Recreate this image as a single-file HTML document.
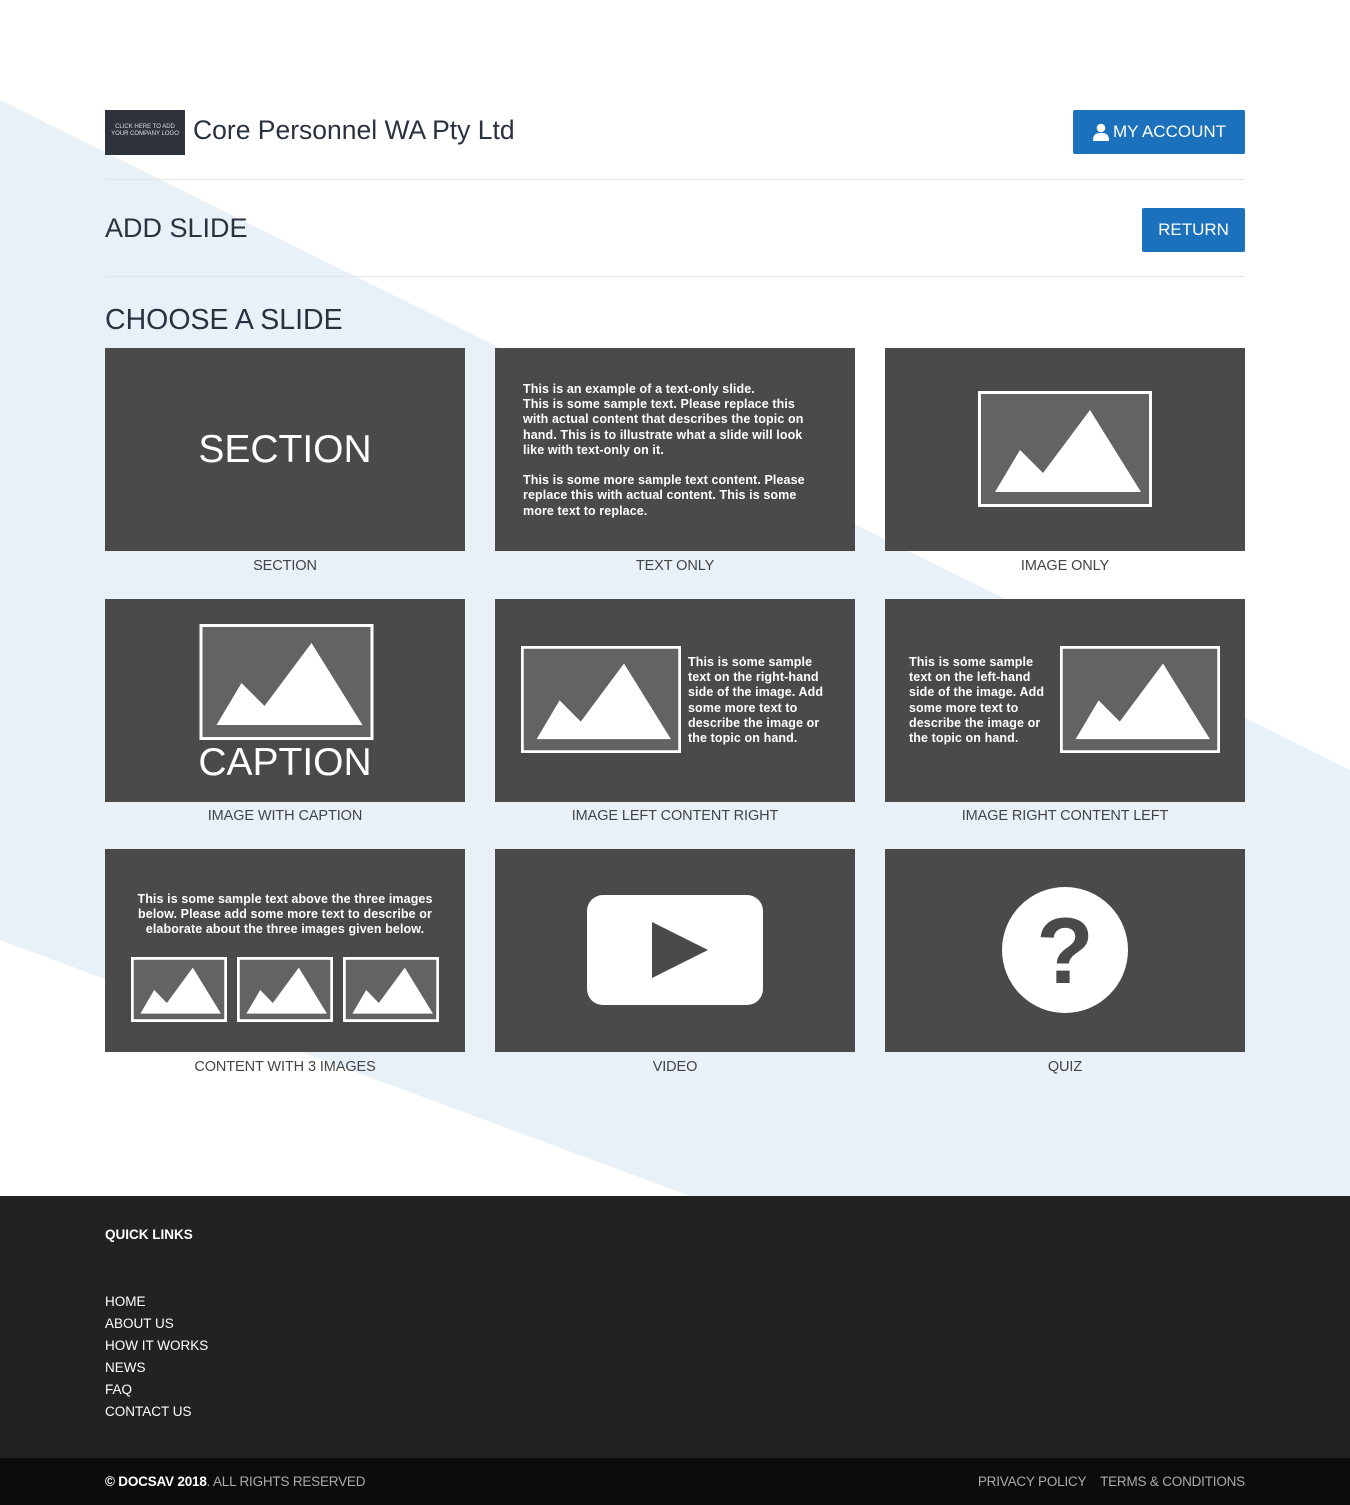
<!DOCTYPE html>
<html><head><meta charset="utf-8"><style>
*{margin:0;padding:0;box-sizing:border-box}
body{width:1350px;height:1505px;position:relative;font-family:"Liberation Sans",sans-serif;background:#fff;overflow:hidden;color:#333}
.abs{position:absolute}
.card{position:absolute;width:360px;height:203px;background:#4a4a4a;overflow:hidden}
.lbl{position:absolute;width:360px;text-align:center;font-size:14.5px;color:#444;letter-spacing:-0.1px}
.btn{position:absolute;background:#1b71bb;color:#fff;font-size:17px;display:flex;align-items:center;justify-content:center;border-radius:2px}
.hr{position:absolute;left:105px;width:1140px;height:1px;background:#e6e6e6}
.t{position:absolute;color:#fff;font-weight:bold;font-size:12.5px;line-height:15.2px;letter-spacing:0.1px}
.ft a{display:block;color:#fff;font-size:13.5px;line-height:22px;text-decoration:none}
</style></head><body>
<svg class="abs" style="left:0;top:0" width="1350" height="1200"><polygon points="0,100 1350,770 1350,1196 690,1196 0,940" fill="#e8f0f8"/></svg>

<div class="abs" style="left:105px;top:110px;width:80px;height:45px;background:#2e333b;color:#ddd;font-size:6px;text-align:center;padding-top:14px;line-height:7px">CLICK HERE TO ADD<br>YOUR COMPANY LOGO</div>
<div class="abs" style="left:193px;top:115px;font-size:26.5px;color:#2a3240">Core Personnel WA Pty Ltd</div>
<div class="btn" style="left:1073px;top:110px;width:172px;height:44px"><svg width="18" height="18" viewBox="0 0 18 18" style="margin-right:3px"><circle cx="9" cy="5" r="4.3" fill="#fff"/><path d="M1 18 C1 11 4 10 9 10 C14 10 17 11 17 18Z" fill="#fff"/></svg>MY ACCOUNT</div>
<div class="hr" style="top:179px"></div>
<div class="abs" style="left:105px;top:213px;font-size:27px;color:#2a3240">ADD SLIDE</div>
<div class="btn" style="left:1142px;top:208px;width:103px;height:44px">RETURN</div>
<div class="hr" style="top:276px"></div>
<div class="abs" style="left:105px;top:304px;font-size:28.5px;color:#2a3240">CHOOSE A SLIDE</div>

<!-- row1 -->
<div class="card" style="left:105px;top:348px"><div class="abs" style="width:360px;top:80px;text-align:center;color:#fff;font-size:39px">SECTION</div></div>
<div class="lbl" style="left:105px;top:558px">SECTION</div>
<div class="card" style="left:495px;top:348px"><div class="t" style="left:28px;top:34px;width:292px">This is an example of a text-only slide.<br>This is some sample text. Please replace this with actual content that describes the topic on hand. This is to illustrate what a slide will look like with text-only on it.<br><br>This is some more sample text content. Please replace this with actual content. This is some more text to replace.</div></div>
<div class="lbl" style="left:495px;top:558px">TEXT ONLY</div>
<div class="card" style="left:885px;top:348px"><svg class="abs" style="left:93px;top:43px" width="174" height="116" viewBox="0 0 174 116"><rect x="1.5" y="1.5" width="171" height="113" fill="#636363" stroke="#fff" stroke-width="3"/><polygon points="17,101 42,59 65,82 112,19 163,101" fill="#fff"/></svg></div>
<div class="lbl" style="left:885px;top:558px">IMAGE ONLY</div>

<!-- row2 -->
<div class="card" style="left:105px;top:599px"><svg class="abs" style="left:94px;top:25px" width="175" height="116" viewBox="0 0 174 116"><rect x="1.5" y="1.5" width="171" height="113" fill="#636363" stroke="#fff" stroke-width="3"/><polygon points="17,101 42,59 65,82 112,19 163,101" fill="#fff"/></svg><div class="abs" style="width:360px;top:142px;text-align:center;color:#fff;font-size:39px">CAPTION</div></div>
<div class="lbl" style="left:105px;top:808px">IMAGE WITH CAPTION</div>
<div class="card" style="left:495px;top:599px"><svg class="abs" style="left:26px;top:47px" width="160" height="107" viewBox="0 0 174 116" preserveAspectRatio="none"><rect x="1.5" y="1.5" width="171" height="113" fill="#636363" stroke="#fff" stroke-width="3"/><polygon points="17,101 42,59 65,82 112,19 163,101" fill="#fff"/></svg><div class="t" style="left:193px;top:56px;width:142px">This is some sample text on the right-hand side of the image. Add some more text to describe the image or the topic on hand.</div></div>
<div class="lbl" style="left:495px;top:808px">IMAGE LEFT CONTENT RIGHT</div>
<div class="card" style="left:885px;top:599px"><div class="t" style="left:24px;top:56px;width:142px">This is some sample text on the left-hand side of the image. Add some more text to describe the image or the topic on hand.</div><svg class="abs" style="left:175px;top:47px" width="160" height="107" viewBox="0 0 174 116" preserveAspectRatio="none"><rect x="1.5" y="1.5" width="171" height="113" fill="#636363" stroke="#fff" stroke-width="3"/><polygon points="17,101 42,59 65,82 112,19 163,101" fill="#fff"/></svg></div>
<div class="lbl" style="left:885px;top:808px">IMAGE RIGHT CONTENT LEFT</div>

<!-- row3 -->
<div class="card" style="left:105px;top:849px"><div class="t" style="left:24px;top:43px;width:312px;text-align:center">This is some sample text above the three images below. Please add some more text to describe or elaborate about the three images given below.</div>
<svg class="abs" style="left:26px;top:108px" width="96" height="65" viewBox="0 0 174 116" preserveAspectRatio="none"><rect x="2.5" y="2.5" width="169" height="111" fill="#636363" stroke="#fff" stroke-width="5"/><polygon points="17,101 42,59 65,82 112,19 163,101" fill="#fff"/></svg>
<svg class="abs" style="left:132px;top:108px" width="96" height="65" viewBox="0 0 174 116" preserveAspectRatio="none"><rect x="2.5" y="2.5" width="169" height="111" fill="#636363" stroke="#fff" stroke-width="5"/><polygon points="17,101 42,59 65,82 112,19 163,101" fill="#fff"/></svg>
<svg class="abs" style="left:238px;top:108px" width="96" height="65" viewBox="0 0 174 116" preserveAspectRatio="none"><rect x="2.5" y="2.5" width="169" height="111" fill="#636363" stroke="#fff" stroke-width="5"/><polygon points="17,101 42,59 65,82 112,19 163,101" fill="#fff"/></svg></div>
<div class="lbl" style="left:105px;top:1059px">CONTENT WITH 3 IMAGES</div>
<div class="card" style="left:495px;top:849px"><svg class="abs" style="left:92px;top:46px" width="176" height="110"><rect width="176" height="110" rx="16" fill="#fff"/><polygon points="65,27 121,55 65,83" fill="#4a4a4a"/></svg></div>
<div class="lbl" style="left:495px;top:1059px">VIDEO</div>
<div class="card" style="left:885px;top:849px"><svg class="abs" style="left:117px;top:38px" width="126" height="126"><circle cx="63" cy="63" r="63" fill="#fff"/><text x="63" y="96" text-anchor="middle" font-family="Liberation Sans" font-weight="bold" font-size="94" fill="#4a4a4a">?</text></svg></div>
<div class="lbl" style="left:885px;top:1059px">QUIZ</div>

<div class="abs ft" style="left:0;top:1196px;width:1350px;height:262px;background:#222">
<div class="abs" style="left:105px;top:31px;color:#fff;font-weight:bold;font-size:13.5px">QUICK LINKS</div>
<div class="abs" style="left:105px;top:95px"><a>HOME</a><a>ABOUT US</a><a>HOW IT WORKS</a><a>NEWS</a><a>FAQ</a><a>CONTACT US</a></div>
</div>
<div class="abs" style="left:0;top:1458px;width:1350px;height:47px;background:#0c0c0c;font-size:13.5px">
<div class="abs" style="left:105px;top:16px;color:#aaa;letter-spacing:-0.2px"><span style="color:#fff;font-weight:bold">© DOCSAV 2018</span>. ALL RIGHTS RESERVED</div>
<div class="abs" style="right:105px;top:16px;color:#aaa;letter-spacing:-0.2px">PRIVACY POLICY &nbsp;&nbsp; TERMS &amp; CONDITIONS</div>
</div>
</body></html>
